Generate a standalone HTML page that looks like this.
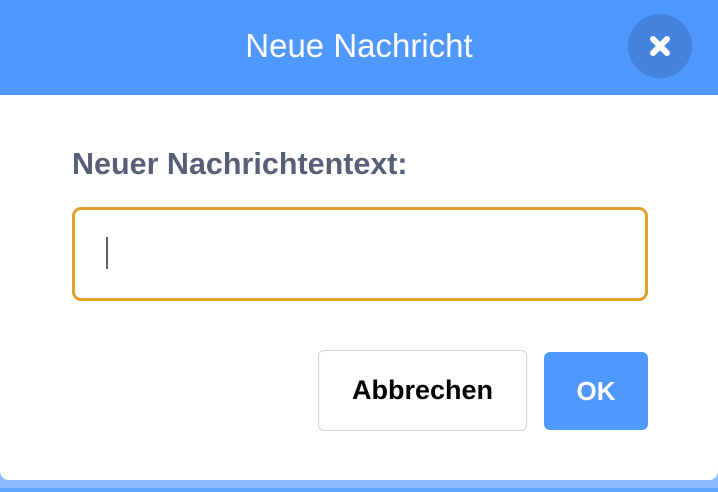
<!DOCTYPE html>
<html><head><style>
body{margin:0;width:718px;height:492px;overflow:hidden;background:#5fa2ff;font-family:"Liberation Sans",sans-serif;position:relative}
.strip{position:absolute;left:0;top:472px;width:718px;height:16px;background:#8abbff}
.card{position:absolute;left:0;top:0;width:718px;height:480px;background:#fff;border-radius:0 0 9px 9px}
.hdr{position:absolute;left:0;top:0;width:718px;height:95px;background:#4f98fd;color:#fff;font-size:33px;text-align:center;line-height:92px}
.close{position:absolute;left:628px;top:14px;width:64px;height:64px;border-radius:50%;background:#4382dd}
.lbl{position:absolute;left:72px;top:146px;font-size:30.5px;font-weight:bold;color:#575e75;line-height:36px}
.inp{position:absolute;left:72px;top:207px;width:570px;height:88px;border:3px solid #e5a02c;border-radius:9px}
.caret{position:absolute;left:106px;top:237px;width:2px;height:32px;background:#575e75}
.b1{position:absolute;left:318px;top:350px;width:207px;height:79px;border:1.5px solid #d4d4d4;border-radius:6px;font-size:27px;font-weight:bold;text-align:center;line-height:79px;color:#000}
.b2{position:absolute;left:544px;top:352px;width:104px;height:78px;background:#4f98fd;border-radius:6px;font-size:26px;font-weight:bold;text-align:center;line-height:78px;color:#fff}
</style></head><body>
<div class="strip"></div>
<div class="card"></div>
<div class="hdr">Neue Nachricht</div>
<div class="close"><svg width="64" height="64" viewBox="0 0 64 64"><path d="M25 25L39 39M39 25L25 39" stroke="#fff" stroke-width="6" stroke-linecap="round"/></svg></div>
<div class="lbl">Neuer Nachrichtentext:</div>
<div class="inp"></div>
<div class="caret"></div>
<div class="b1">Abbrechen</div>
<div class="b2">OK</div>
</body></html>
